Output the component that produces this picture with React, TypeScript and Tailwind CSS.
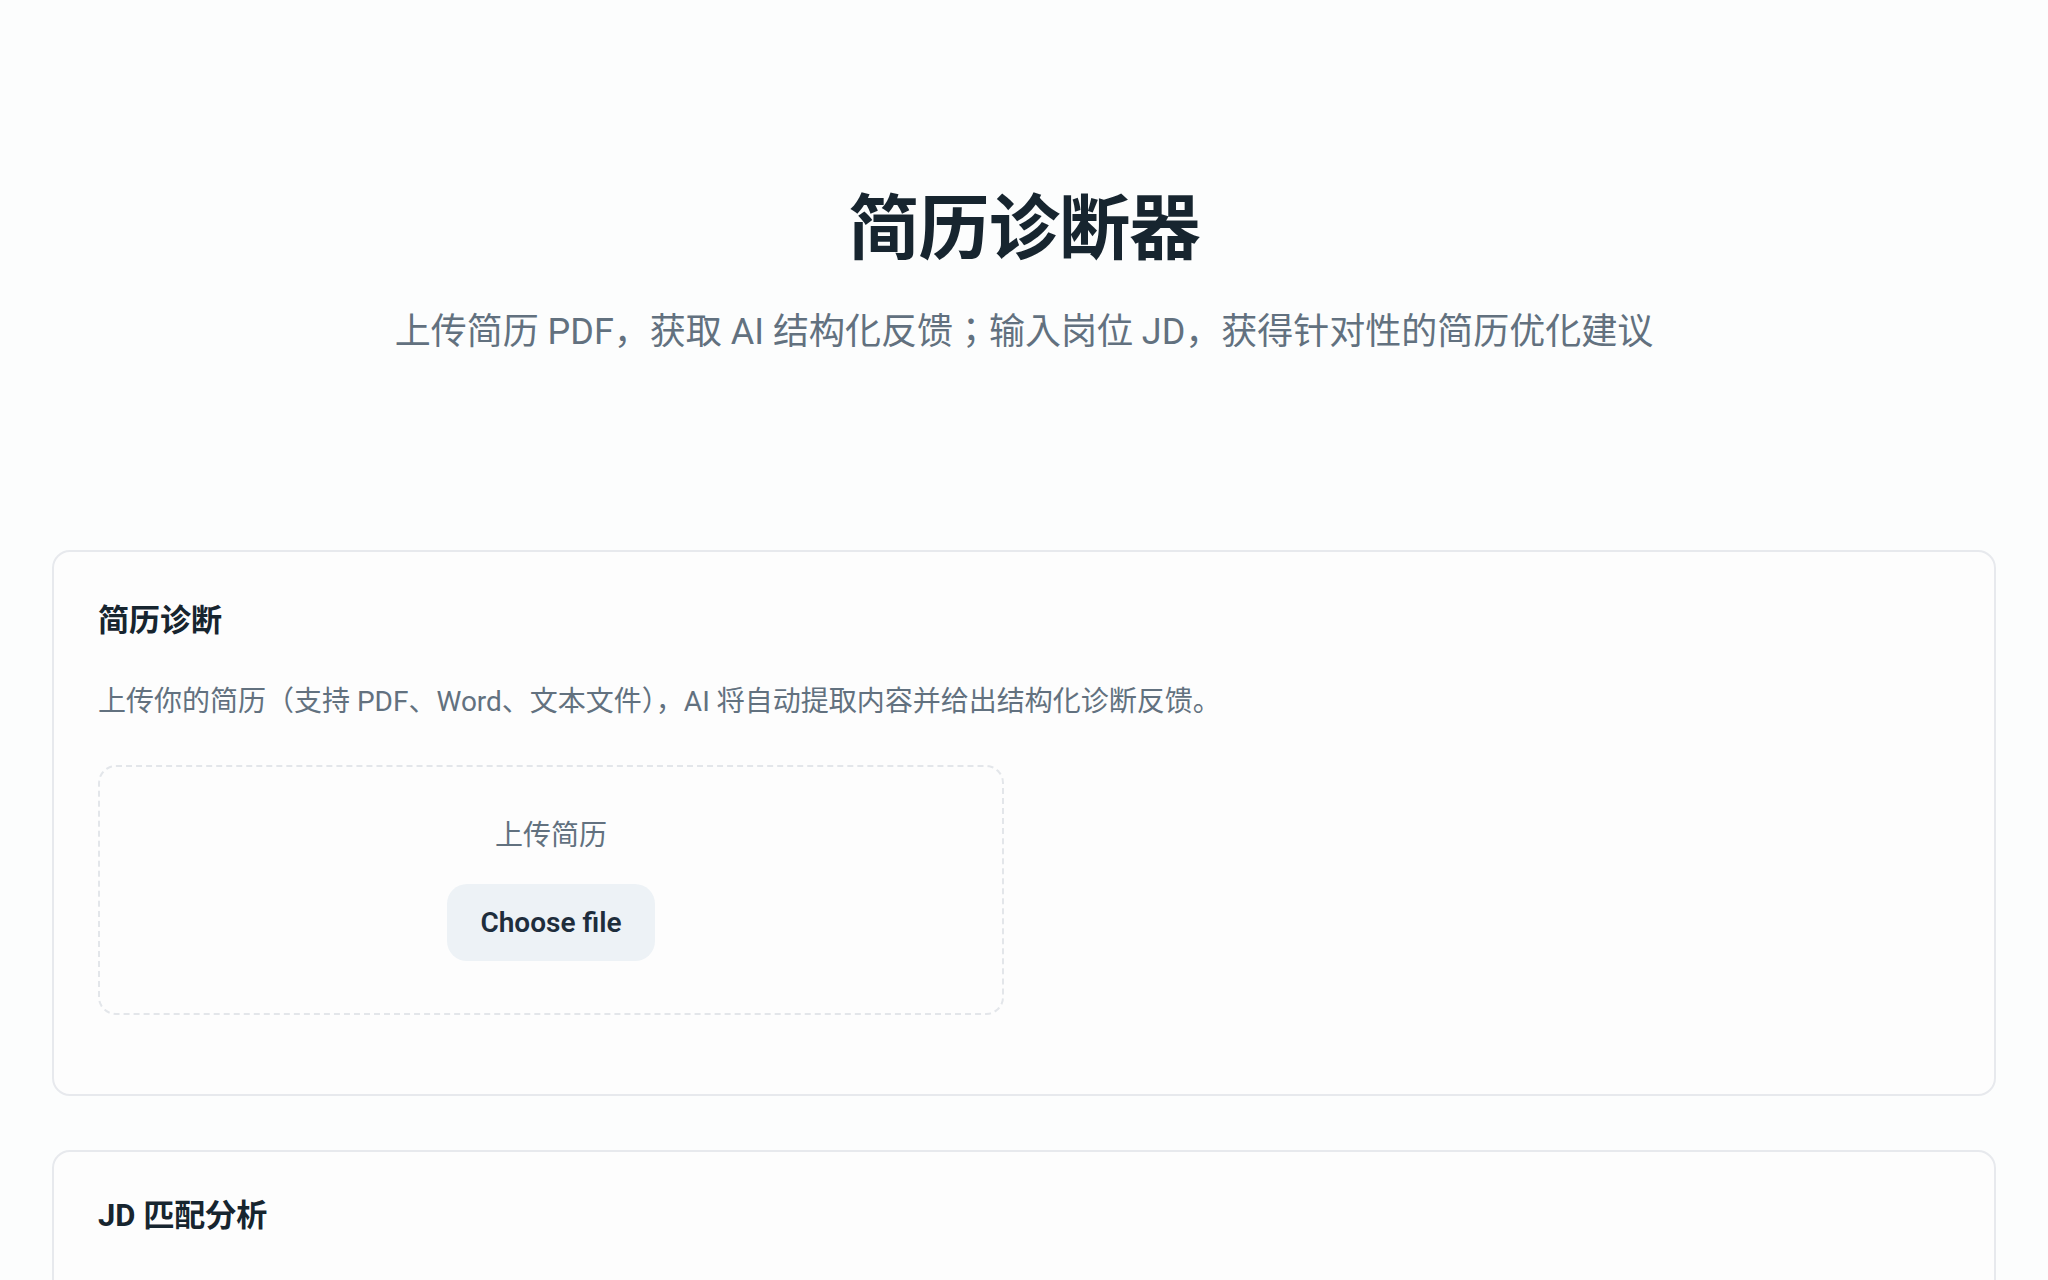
export default function App() {
  return (
    <div className="min-h-screen bg-[#fcfdfd] px-[52px] font-[Roboto,'Noto_Sans_CJK_JP',sans-serif] text-[#1a2734]">
      {/* Page header */}
      <header className="pt-[187px] text-center">
        <h1 className="text-[71px] font-bold leading-[84px] tracking-[-0.01em] text-[#17252f]">
          简历诊断器
        </h1>
        <p className="mt-[34px] text-[36px] leading-[54px] text-[#62717f]">
          上传简历 PDF，获取 AI 结构化反馈；输入岗位 JD，获得针对性的简历优化建议
        </p>
      </header>

      <main className="mt-[191px] flex flex-col gap-[54px] pb-20">
        {/* Resume diagnosis */}
        <section className="rounded-[18px] border-2 border-[#e7e9ed] bg-[#fdfdfd] px-11 pb-[79px] pt-[47px]">
          <h2 className="text-[31px] font-bold leading-[44px] text-[#17252f]">简历诊断</h2>
          <p className="mt-[36px] text-[28px] leading-[45px] text-[#62717f]">
            上传你的简历（支持 PDF、Word、文本文件），AI 将自动提取内容并给出结构化诊断反馈。
          </p>
          <label className="mt-[41px] flex w-[906px] flex-col items-center rounded-[18px] border-2 border-dashed border-[#e3e6ea] pb-[52px] pt-[48px]">
            <span className="text-[28px] leading-[42px] text-[#62717f]">上传简历</span>
            <span className="mt-[27px] flex h-[77px] items-center rounded-[20px] bg-[#edf2f6] px-[33px] text-[28px] font-semibold text-[#1e2d3c]">
              Choose file
            </span>
          </label>
        </section>

        {/* JD matching */}
        <section className="min-h-[300px] rounded-[18px] border-2 border-[#e7e9ed] bg-[#fdfdfd] px-11 pb-[77px] pt-[42px]">
          <h2 className="text-[31px] font-bold leading-[44px] text-[#17252f]">JD 匹配分析</h2>
        </section>
      </main>
    </div>
  );
}
